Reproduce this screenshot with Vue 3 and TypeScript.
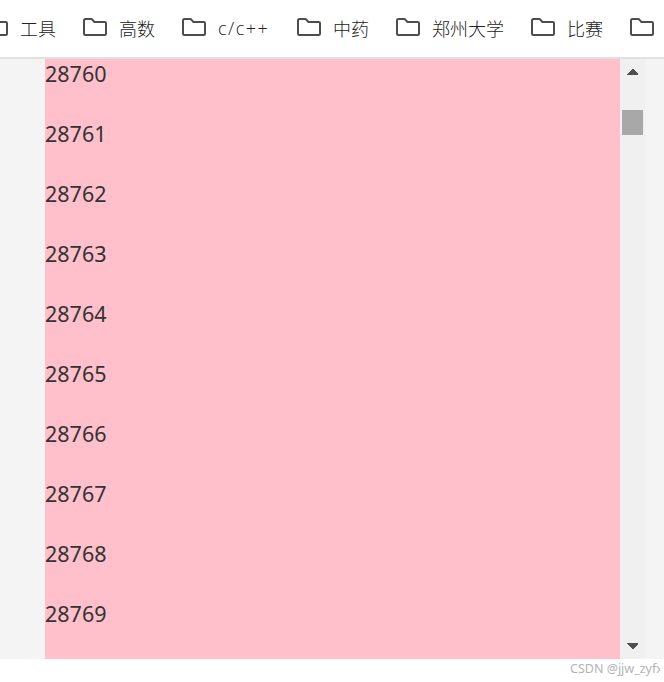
<script setup lang="ts">
interface Bookmark {
  label: string
  kind?: 'latin' | 'icon'
}

const bookmarks: Bookmark[] = [
  { label: '工具' },
  { label: '高数' },
  { label: 'c/c++', kind: 'latin' },
  { label: '中药' },
  { label: '郑州大学' },
  { label: '比赛' },
  { label: '', kind: 'icon' },
]

const rows: number[] = Array.from({ length: 10 }, (_, i) => 28760 + i)
</script>

<template>
  <div class="window">
    <nav class="bookmarks">
      <div v-for="(b, i) in bookmarks" :key="i" class="bookmark">
        <svg class="folder" width="25" height="20" viewBox="0 0 25 20">
          <path
            d="M2.5 2H8Q9 2 9.6 2.8L11.4 5H21.8Q23 5 23 6.2V16.8Q23 18 21.8 18H2.2Q1 18 1 16.8V3.5Q1 2 2.5 2Z"
            fill="none"
            stroke="#4d4d4d"
            stroke-width="2"
          />
        </svg>
        <span v-if="b.label" class="label" :class="b.kind">{{ b.label }}</span>
      </div>
    </nav>
    <main class="viewport">
      <div class="list">
        <div v-for="n in rows" :key="n" class="row">{{ n }}</div>
      </div>
      <div class="scrollbar">
        <svg class="arrow" width="11" height="6" viewBox="0 0 11 6" shape-rendering="crispEdges">
          <path d="M5 0H6L11 5V6H0V5Z" fill="#505050" />
        </svg>
        <div class="thumb"></div>
        <svg class="arrow down" width="11" height="6" viewBox="0 0 11 6" shape-rendering="crispEdges">
          <path d="M0 0H11V1L6 6H5L0 1Z" fill="#505050" />
        </svg>
      </div>
    </main>
    <footer class="credit">CSDN @jjw_zyfx</footer>
  </div>
</template>

<style>
body {
  margin: 0;
  background: #fff;
  overflow: hidden;
}
</style>

<style scoped>
.window {
  width: 664px;
  height: 682px;
  overflow: hidden;
  background: #fff;
  font-family: "Noto Sans", "Noto Sans CJK SC", sans-serif;
}
.bookmarks {
  box-sizing: border-box;
  height: 59px;
  display: flex;
  gap: 27px;
  margin-left: -16px;
  padding-top: 16px;
  border-bottom: 2px solid #e0e2e0;
}
.bookmark {
  display: flex;
  flex: none;
  gap: 11px;
  height: 24px;
}
.folder {
  flex: none;
  display: block;
  margin-top: 1px;
}
.label {
  font: 300 18px/24px "Noto Sans CJK SC", sans-serif;
  color: #222;
  white-space: nowrap;
}
.label.latin {
  width: 52px;
  font-family: "Open Sans", "Noto Sans", sans-serif;
  font-weight: 300;
  letter-spacing: 1.5px;
}
.viewport {
  display: flex;
  height: 600px;
  padding-left: 45px;
  background: #f4f4f4;
  overflow: hidden;
}
.list {
  width: 575px;
  background: #ffc0cb;
}
.row {
  height: 60px;
  font-size: 21.5px;
  line-height: 30px;
  color: #333;
}
.scrollbar {
  box-sizing: border-box;
  width: 25px;
  height: 600px;
  display: flex;
  flex-direction: column;
  align-items: center;
  padding: 10px 0;
  background: #f0f0f0;
}
.arrow {
  display: block;
  flex: none;
}
.thumb {
  width: 21px;
  height: 25px;
  margin-top: 35px;
  background: #a8a8a8;
}
.down {
  margin-top: auto;
}
.credit {
  width: 90px;
  margin-left: 570px;
  padding-top: 1px;
  overflow: hidden;
  font-size: 12.5px;
  line-height: 18px;
  color: #b4b4b4;
  white-space: nowrap;
}
</style>
